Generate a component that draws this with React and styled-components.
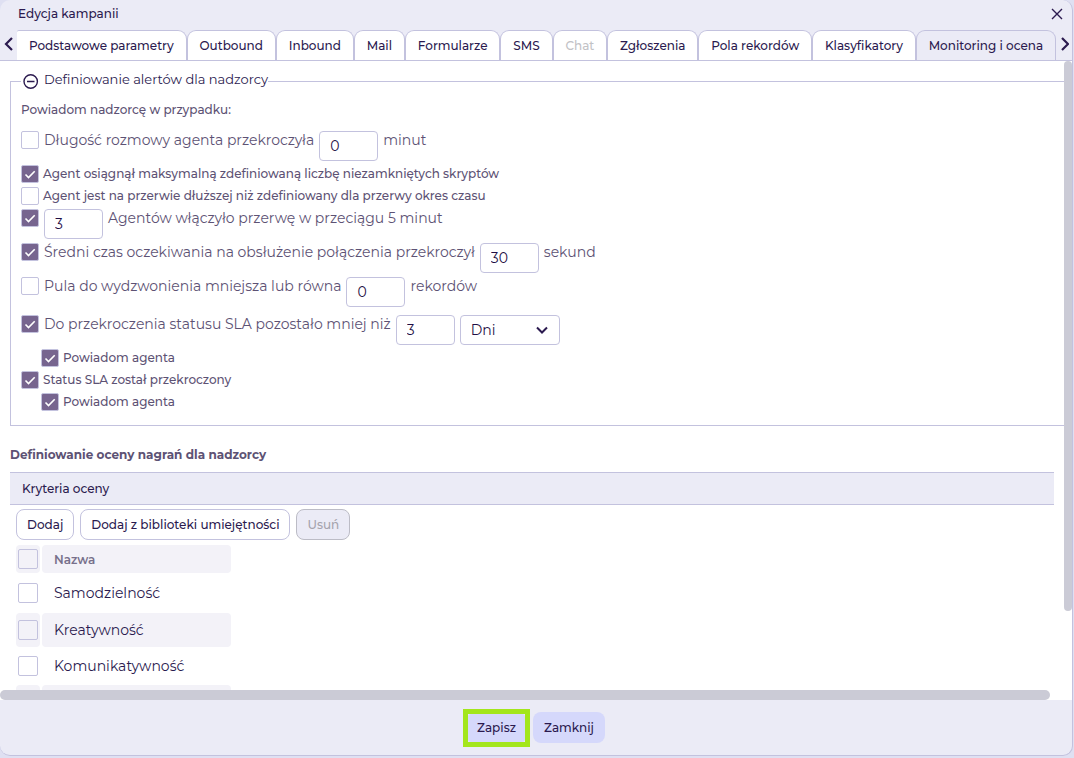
import React, { useState } from "react";
import styled, { createGlobalStyle, css } from "styled-components";

const GlobalStyle = createGlobalStyle`
  * {
    box-sizing: border-box;
  }
  body {
    margin: 0;
    background: #dfe0f2;
    color: #2b1a4f;
    font-family: Montserrat, Inter, "Noto Sans", sans-serif;
    font-size: 12px;
  }
  button, input, select {
    font-family: inherit;
    color: inherit;
    margin: 0;
  }
`;

const Dialog = styled.div`
  height: calc(100vh - 2px);
  margin-right: 1px;
  display: flex;
  flex-direction: column;
  background: #ebebf6;
  border-right: 1px solid #c3c2de;
  border-bottom: 1px solid #c3c2de;
  border-radius: 10px;
  overflow: hidden;
`;
const Header = styled.header`
  display: flex;
  align-items: center;
  justify-content: space-between;
  height: 30px;
  padding: 0 7px 3px 18px;
`;
const Title = styled.h1`
  margin: 0;
  font-size: 12px;
  font-weight: 500;
`;
const IconButton = styled.button`
  display: flex;
  align-items: center;
  justify-content: center;
  flex: none;
  width: ${(props) => props.$width || 16}px;
  padding: 0;
  border: none;
  background: none;
  cursor: pointer;
`;
const TabBar = styled.nav`
  display: flex;
  height: 31px;
  border-bottom: 1px solid #c3c2de;
`;
const Tabs = styled.div`
  display: flex;
  flex: 1;
  min-width: 0;
`;
const Tab = styled.button`
  flex: 1 0 auto;
  padding: 0 10px;
  border: 1px solid #c3c2de;
  border-bottom: none;
  border-radius: 9px 9px 0 0;
  background: ${(props) => (props.$active ? "#ebebf6" : "#ffffff")};
  font-size: 12px;
  font-weight: 500;
  cursor: pointer;
  &:first-child {
    border-left: none;
    border-top-left-radius: 2px;
  }
  &:disabled {
    color: #c2c2c6;
    cursor: default;
  }
`;

const Body = styled.main`
  flex: 1;
  min-height: 0;
  display: grid;
  grid-template-columns: minmax(0, 1fr) 8px;
  grid-template-rows: minmax(0, 1fr) 10px;
  background: #ffffff;
`;
const Content = styled.div`
  overflow: hidden;
  padding: 10px 10px 0;
`;
const VerticalThumb = styled.div`
  margin-bottom: 79px;
  border-radius: 5px;
  background: #cbcbd6;
`;
const HorizontalThumb = styled.div`
  margin-right: 14px;
  border-radius: 5px;
  background: #cbcbd6;
`;

const Fieldset = styled.fieldset`
  margin: 0 -20px 0 0;
  padding: 11px 10px 14px;
  border: 1px solid #c3c2de;
`;
const Legend = styled.legend`
  display: flex;
  gap: 5px;
  height: 20px;
  padding: 0 0 0 2px;
  font-size: 13px;
  line-height: 16px;
  svg {
    align-self: center;
  }
`;
const Hint = styled.p`
  margin: 0 0 13px;
  color: #5d5274;
  font-weight: 500;
  line-height: 16px;
`;
const Alerts = styled.div`
  display: flex;
  flex-direction: column;
  gap: 4px;
  color: #5d5274;
`;
const AlertRow = styled.div`
  display: flex;
  align-items: flex-start;
  gap: ${(props) => (props.$large ? 5 : 4)}px;
  font-size: ${(props) => (props.$large ? 14 : 12)}px;
  font-weight: ${(props) => (props.$large ? 400 : 500)};
  line-height: 18px;
  padding-top: ${(props) => (props.$spaced ? 4 : 0)}px;
  padding-left: ${(props) => (props.$nested ? 20 : 0)}px;
`;
const checkMark = `url("data:image/svg+xml,%3Csvg xmlns='http://www.w3.org/2000/svg' viewBox='0 0 16 16' fill='none' stroke='white' stroke-width='1.6'%3E%3Cpath d='M3.5 8.5 L6.5 11.5 L12.7 5.2'/%3E%3C/svg%3E")`;
const Checkbox = styled.input.attrs({ type: "checkbox" })`
  appearance: none;
  display: block;
  flex: none;
  width: ${(props) => props.$size || 18}px;
  height: ${(props) => props.$size || 18}px;
  border: 1px solid #c3c2de;
  border-radius: 2px;
  background: transparent;
  cursor: pointer;
  &:checked {
    background: #77658f ${checkMark} center / contain no-repeat;
  }
`;
const field = css`
  height: 30px;
  border: 1px solid #c3c2de;
  border-radius: 4px;
  background: #ffffff;
  color: #1f0f45;
  font-size: 14px;
`;
const NumberInput = styled.input`
  ${field}
  width: 59px;
  padding: 0 10px;
`;
const SelectWrapper = styled.div`
  display: grid;
  align-items: center;
  svg {
    grid-area: 1 / 1;
    justify-self: end;
    margin-right: 12px;
    pointer-events: none;
  }
`;
const Select = styled.select`
  ${field}
  grid-area: 1 / 1;
  appearance: none;
  width: 100px;
  padding: 0 10px;
`;

const SectionTitle = styled.h2`
  margin: 20px 0 9px;
  color: #5d5274;
  font-size: 12px;
  font-weight: 700;
  line-height: 17px;
`;
const PanelTitle = styled.h3`
  margin: 0;
  padding: 0 12px;
  border: solid #c3c2de;
  border-width: 1px 0;
  background: #ebebf6;
  font-size: 12px;
  font-weight: 500;
  line-height: 31px;
`;
const Toolbar = styled.div`
  display: flex;
  gap: 6px;
  padding: 4px 6px 3px;
`;
const ToolButton = styled.button`
  height: 31px;
  padding: 0 10px;
  border: 1px solid #c3c2de;
  border-radius: 8px;
  background: #ffffff;
  font-size: 12px;
  font-weight: 500;
  cursor: pointer;
  &:disabled {
    border-color: #bcbcc6;
    background: #ebebf6;
    color: #a5a3ad;
    cursor: default;
  }
`;
const Table = styled.table`
  margin-left: 4px;
  border-spacing: 2px;
`;
const Cell = styled.td`
  height: 34px;
  width: ${(props) => (props.$check ? 24 : 189)}px;
  padding: 0 ${(props) => (props.$check ? 2 : 12)}px;
  border-radius: 4px;
  text-align: left;
  font-size: 14px;
  tbody > tr:first-child > & {
    height: 36px;
  }
  tr:nth-child(even) > & {
    background: #f3f2f8;
  }
`;
const HeadCell = styled(Cell)`
  height: 28px;
  background: #f3f2f8;
  color: #77708b;
  font-size: 12px;
  font-weight: 600;
`;

const Footer = styled.footer`
  display: flex;
  align-items: center;
  justify-content: center;
  gap: 3px;
  height: 55px;
  padding-right: 4px;
`;
const Highlight = styled.div`
  border: 5px solid #a3e61c;
`;
const FooterButton = styled.button`
  display: block;
  height: ${(props) => (props.$compact ? 28 : 31)}px;
  min-width: ${(props) => (props.$compact ? 57 : 72)}px;
  padding: 0;
  border: none;
  border-radius: ${(props) => (props.$compact ? 3 : 8)}px;
  background: #d5d8fb;
  font-size: 12px;
  font-weight: 500;
  cursor: pointer;
`;

const Stroke = ({ d, width, height, weight = 2 }) => (
  <svg
    width={width}
    height={height}
    viewBox={`0 0 ${width} ${height}`}
    fill="none"
    stroke="#2b1a4f"
    strokeWidth={weight}
    aria-hidden="true"
  >
    <path d={d} />
  </svg>
);

const tabs = [
  "Podstawowe parametry",
  "Outbound",
  "Inbound",
  "Mail",
  "Formularze",
  "SMS",
  "Chat",
  "Zgłoszenia",
  "Pola rekordów",
  "Klasyfikatory",
  "Monitoring i ocena",
];

const alerts = [
  { id: "talk", before: "Długość rozmowy agenta przekroczyła", value: "0", after: "minut" },
  {
    id: "scripts",
    label: "Agent osiągnął maksymalną zdefiniowaną liczbę niezamkniętych skryptów",
    checked: true,
  },
  { id: "break", label: "Agent jest na przerwie dłuższej niż zdefiniowany dla przerwy okres czasu" },
  { id: "agents", value: "3", after: "Agentów włączyło przerwę w przeciągu 5 minut", checked: true },
  {
    id: "wait",
    before: "Średni czas oczekiwania na obsłużenie połączenia przekroczył",
    value: "30",
    after: "sekund",
    checked: true,
  },
  { id: "pool", before: "Pula do wydzwonienia mniejsza lub równa", value: "0", after: "rekordów" },
  {
    id: "sla",
    before: "Do przekroczenia statusu SLA pozostało mniej niż",
    value: "3",
    unit: true,
    checked: true,
    spaced: true,
  },
  { id: "sla-agent", label: "Powiadom agenta", checked: true, nested: true },
  { id: "sla-over", label: "Status SLA został przekroczony", checked: true },
  { id: "over-agent", label: "Powiadom agenta", checked: true, nested: true },
];

// the last criterion has no name yet
const criteria = ["Samodzielność", "Kreatywność", "Komunikatywność", ""];

const Alert = ({ alert }) => (
  <AlertRow $large={!alert.label} $spaced={alert.spaced} $nested={alert.nested}>
    <Checkbox id={alert.id} defaultChecked={alert.checked} />
    {(alert.label || alert.before) && <label htmlFor={alert.id}>{alert.label || alert.before}</label>}
    {alert.value && (
      <NumberInput defaultValue={alert.value} aria-label={alert.before || alert.after} />
    )}
    {alert.unit && (
      <SelectWrapper>
        <Select aria-label="Jednostka">
          <option>Dni</option>
          <option>Godziny</option>
        </Select>
        <Stroke d="M1 1.5 L6 6.5 L11 1.5" width={12} height={8} />
      </SelectWrapper>
    )}
    {alert.after && <label htmlFor={alert.id}>{alert.after}</label>}
  </AlertRow>
);

const App = () => {
  const [active, setActive] = useState("Monitoring i ocena");
  return (
    <>
      <GlobalStyle />
      <Dialog role="dialog" aria-label="Edycja kampanii">
        <Header>
          <Title>Edycja kampanii</Title>
          <IconButton aria-label="Zamknij okno">
            <Stroke d="M1 1 L11 11 M11 1 L1 11" width={12} height={12} weight={1.4} />
          </IconButton>
        </Header>
        <TabBar>
          <IconButton $width={17} aria-label="Poprzednie">
            <Stroke d="M8 1 L2 7 L8 13" width={9} height={16} weight={2.2} />
          </IconButton>
          <Tabs>
            {tabs.map((tab) => (
              <Tab
                key={tab}
                $active={tab === active}
                disabled={tab === "Chat"}
                onClick={() => setActive(tab)}
              >
                {tab}
              </Tab>
            ))}
          </Tabs>
          <IconButton $width={16} aria-label="Następne">
            <Stroke d="M2 1 L8 7 L2 13" width={9} height={16} weight={2.2} />
          </IconButton>
        </TabBar>
        <Body>
          <Content>
            <Fieldset>
              <Legend>
                <Stroke
                  d="M1 8.5 a6.7 6.7 0 1 0 13.4 0 a6.7 6.7 0 1 0 -13.4 0 M4 8.5 H11.5"
                  width={16}
                  height={16}
                  weight={1.4}
                />
                Definiowanie alertów dla nadzorcy
              </Legend>
              <Hint>Powiadom nadzorcę w przypadku:</Hint>
              <Alerts>
                {alerts.map((alert) => (
                  <Alert key={alert.id} alert={alert} />
                ))}
              </Alerts>
            </Fieldset>
            <SectionTitle>Definiowanie oceny nagrań dla nadzorcy</SectionTitle>
            <PanelTitle>Kryteria oceny</PanelTitle>
            <Toolbar>
              <ToolButton>Dodaj</ToolButton>
              <ToolButton>Dodaj z biblioteki umiejętności</ToolButton>
              <ToolButton disabled>Usuń</ToolButton>
            </Toolbar>
            <Table>
              <thead>
                <tr>
                  <HeadCell as="th" $check>
                    <Checkbox $size={20} aria-label="Zaznacz wszystkie" />
                  </HeadCell>
                  <HeadCell as="th">Nazwa</HeadCell>
                </tr>
              </thead>
              <tbody>
                {criteria.map((name, index) => (
                  <tr key={index}>
                    <Cell $check>
                      <Checkbox $size={20} aria-label={name || "Kryterium"} />
                    </Cell>
                    <Cell>{name}</Cell>
                  </tr>
                ))}
              </tbody>
            </Table>
          </Content>
          <VerticalThumb />
          <HorizontalThumb />
        </Body>
        <Footer>
          <Highlight>
            <FooterButton $compact>Zapisz</FooterButton>
          </Highlight>
          <FooterButton>Zamknij</FooterButton>
        </Footer>
      </Dialog>
    </>
  );
};

export default App;
